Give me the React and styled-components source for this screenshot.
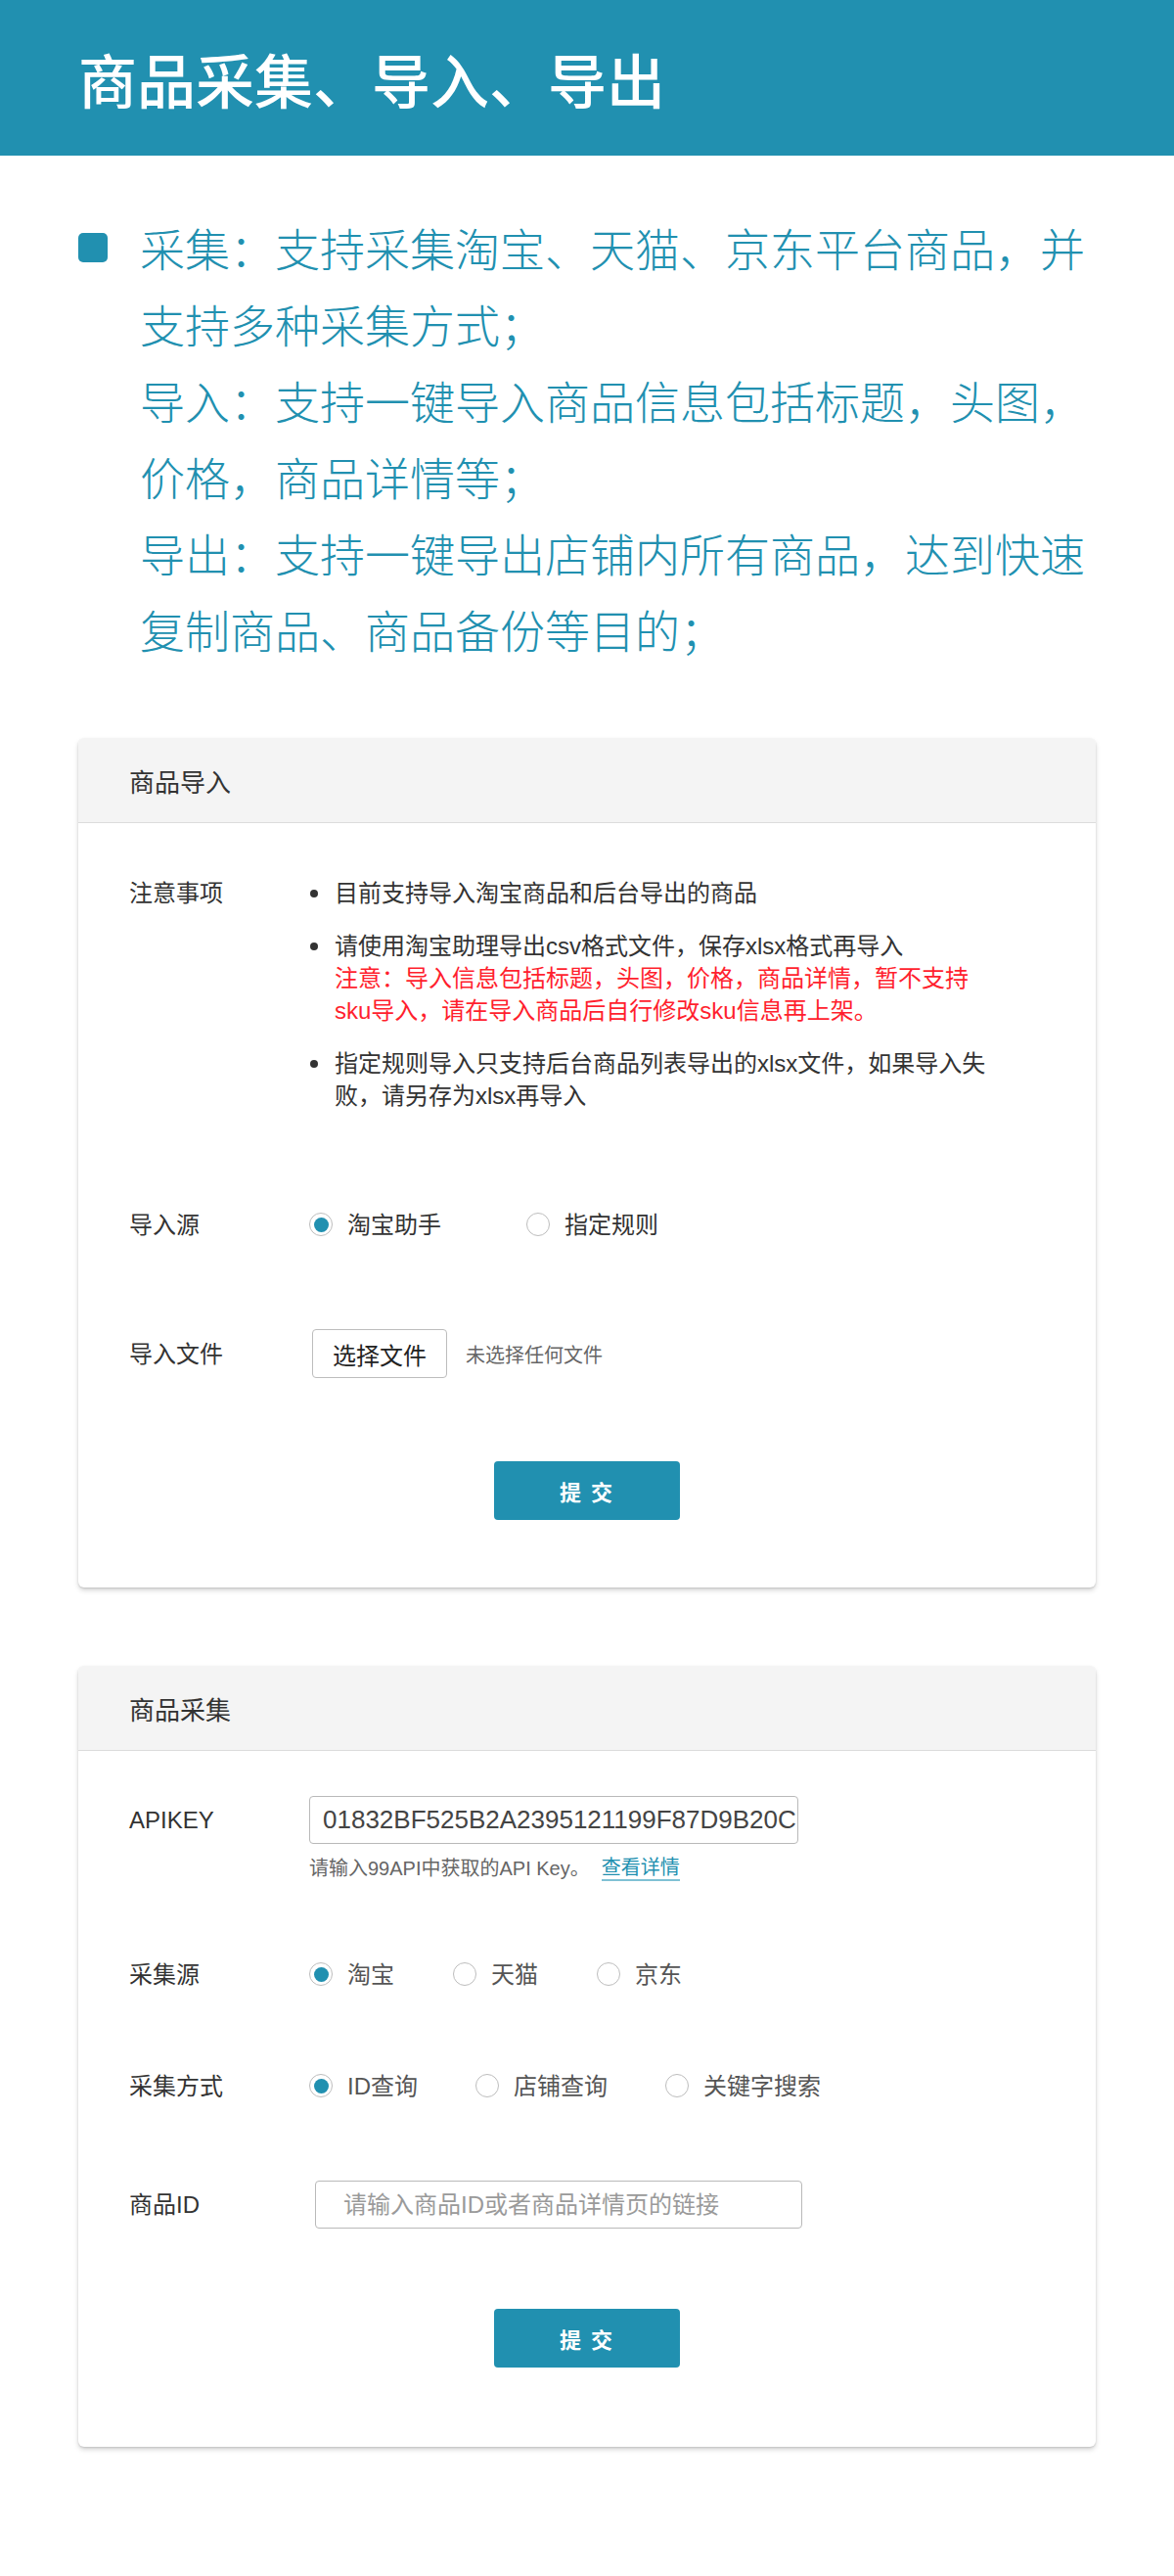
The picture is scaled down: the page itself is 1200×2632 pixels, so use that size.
import React from "react";
import styled, { createGlobalStyle } from "styled-components";

const TEAL = "#2190b0";
const FONT = `"Liberation Sans", "Noto Sans CJK SC", sans-serif`;

const Global = createGlobalStyle`
  html, body { margin: 0; padding: 0; background: #fff; }
  body { font-family: ${FONT}; color: #333; }
  * { box-sizing: border-box; }
`;

const Page = styled.div`
  width: 1200px;
  padding-bottom: 131px;
`;

const Header = styled.header`
  height: 159px;
  background: ${TEAL};
  display: flex;
  align-items: center;
  padding-left: 80px;
`;

const Title = styled.h1`
  margin: 0;
  font-family: "Noto Sans CJK SC", sans-serif;
  font-size: 60px;
  font-weight: 500;
  color: #fff;
  line-height: 1;
`;

const Intro = styled.section`
  display: flex;
  align-items: flex-start;
  gap: 33px;
  padding: 54px 80px 0;
`;

const Square = styled.span`
  flex: none;
  width: 30px;
  height: 30px;
  margin-top: 25px;
  border-radius: 5px;
  background: ${TEAL};
`;

const IntroText = styled.div`
  width: 980px;
`;

const IntroPara = styled.p`
  margin: 0;
  font-family: "Noto Sans CJK SC", sans-serif;
  font-size: 46px;
  font-weight: 300;
  line-height: 78px;
  color: ${TEAL};
`;

const Card = styled.section`
  margin: ${(p) => p.$top}px 80px 0;
  width: 1040px;
  background: #fff;
  border-radius: 6px;
  box-shadow: 0 1px 2px rgba(0, 0, 0, 0.12), 0 3px 5px rgba(0, 0, 0, 0.16);
  overflow: hidden;
`;

const CardHead = styled.div`
  height: 87px;
  background: #f4f4f4;
  border-bottom: 1px solid #dcdcdc;
  display: flex;
  align-items: center;
  padding-left: 52px;
  font-size: 26px;
  color: #333;
`;

const CardBody = styled.div`
  display: flex;
  flex-direction: column;
  padding: ${(p) => p.$top}px 52px ${(p) => p.$bottom}px;
`;

const Row = styled.div`
  display: flex;
  align-items: ${(p) => (p.$top ? "flex-start" : "center")};
  min-height: ${(p) => p.$h || 40}px;
  margin-top: ${(p) => p.$mt || 0}px;
`;

const Label = styled.div`
  flex: none;
  width: 184px;
  font-size: 24px;
  line-height: ${(p) => p.$lh || 33}px;
  color: #333;
`;

const Notes = styled.ul`
  list-style: none;
  margin: 0;
  padding: 0;
  width: 700px;
  display: flex;
  flex-direction: column;
  gap: 21px;
`;

const Note = styled.li`
  display: flex;
  align-items: flex-start;
  font-size: 24px;
  line-height: 33px;
  color: #333;
`;

const Dot = styled.span`
  flex: none;
  width: 8px;
  height: 8px;
  border-radius: 50%;
  background: #333;
  margin: 13px 17px 0 1px;
`;

const NoteText = styled.div`
  width: 675px;
`;

const Warn = styled.div`
  color: #ff1f2e;
`;

const RadioGroup = styled.div`
  display: flex;
  align-items: center;
  gap: ${(p) => p.$gap}px;
`;

const Option = styled.label`
  display: flex;
  align-items: center;
  gap: 15px;
  font-size: 24px;
  color: ${(p) => p.$tone || "#333"};
  line-height: 33px;
`;

const Circle = styled.span`
  flex: none;
  width: 24px;
  height: 24px;
  border-radius: 50%;
  border: 1px solid #bdbdbd;
  display: flex;
  align-items: center;
  justify-content: center;
  background: #fff;
  &::after {
    content: "";
    width: 15px;
    height: 15px;
    border-radius: 50%;
    background: ${(p) => (p.$on ? TEAL : "transparent")};
  }
`;

const FileButton = styled.button`
  width: 138px;
  height: 50px;
  margin-left: 3px;
  border: 1px solid #bdbdbd;
  border-radius: 4px;
  background: #fff;
  font-family: ${FONT};
  font-size: 24px;
  color: #222;
  padding: 0;
`;

const FileHint = styled.span`
  margin-left: 19px;
  font-size: 20px;
  color: #666;
`;

const Submit = styled.button`
  align-self: center;
  width: 190px;
  height: 60px;
  margin-top: ${(p) => p.$mt}px;
  border: none;
  border-radius: 4px;
  background: ${TEAL};
  color: #fff;
  font-family: ${FONT};
  font-size: 22px;
  font-weight: 700;
  letter-spacing: 2px;
  padding: 0;
`;

const Field = styled.div`
  display: flex;
  flex-direction: column;
`;

const TextBox = styled.input`
  width: ${(p) => p.$w}px;
  height: 49px;
  margin-left: ${(p) => p.$ml || 0}px;
  border: 1px solid #b9b9b9;
  border-radius: 4px;
  padding: 0 0 0 ${(p) => p.$pl}px;
  font-family: ${FONT};
  font-size: ${(p) => p.$fs}px;
  color: #444;
  outline: none;
  &::placeholder {
    color: #9a9a9a;
  }
`;

const Help = styled.div`
  margin-top: 13px;
  font-size: 20px;
  line-height: 24px;
  color: #666;
  display: flex;
  align-items: flex-start;
`;

const HelpLink = styled.a`
  margin-left: 12px;
  color: ${TEAL};
  text-decoration: none;
  border-bottom: 2px solid #7fc1d4;
  line-height: 23px;
`;

function Radios({ options, checked, gap, tone }) {
  return (
    <RadioGroup $gap={gap}>
      {options.map((o, i) => (
        <Option key={o} $tone={tone}>
          <Circle $on={i === checked} />
          {o}
        </Option>
      ))}
    </RadioGroup>
  );
}

export default function App() {
  return (
    <Page>
      <Global />
      <Header>
        <Title>商品采集、导入、导出</Title>
      </Header>

      <Intro>
        <Square />
        <IntroText>
          <IntroPara>采集：支持采集淘宝、天猫、京东平台商品，并支持多种采集方式；</IntroPara>
          <IntroPara>导入：支持一键导入商品信息包括标题，头图，价格，商品详情等；</IntroPara>
          <IntroPara>导出：支持一键导出店铺内所有商品，达到快速复制商品、商品备份等目的；</IntroPara>
        </IntroText>
      </Intro>

      <Card $top={73}>
        <CardHead>商品导入</CardHead>
        <CardBody $top={55} $bottom={69}>
          <Row $top>
            <Label>注意事项</Label>
            <Notes>
              <Note>
                <Dot />
                <NoteText>目前支持导入淘宝商品和后台导出的商品</NoteText>
              </Note>
              <Note>
                <Dot />
                <NoteText>
                  请使用淘宝助理导出csv格式文件，保存xlsx格式再导入
                  <Warn>注意：导入信息包括标题，头图，价格，商品详情，暂不支持sku导入，请在导入商品后自行修改sku信息再上架。</Warn>
                </NoteText>
              </Note>
              <Note>
                <Dot />
                <NoteText>指定规则导入只支持后台商品列表导出的xlsx文件，如果导入失败，请另存为xlsx再导入</NoteText>
              </Note>
            </Notes>
          </Row>
          <Row $mt={95}>
            <Label>导入源</Label>
            <Radios options={["淘宝助手", "指定规则"]} checked={0} gap={87} />
          </Row>
          <Row $mt={87} $h={50}>
            <Label>导入文件</Label>
            <FileButton>选择文件</FileButton>
            <FileHint>未选择任何文件</FileHint>
          </Row>
          <Submit $mt={85}>提 交</Submit>
        </CardBody>
      </Card>

      <Card $top={80}>
        <CardHead>商品采集</CardHead>
        <CardBody $top={46} $bottom={81}>
          <Row $top>
            <Label $lh={49}>APIKEY</Label>
            <Field>
              <TextBox $w={500} $pl={13} $fs={26} defaultValue="01832BF525B2A2395121199F87D9B20C" />
              <Help>
                请输入99API中获取的API Key。
                <HelpLink>查看详情</HelpLink>
              </Help>
            </Field>
          </Row>
          <Row $mt={75}>
            <Label>采集源</Label>
            <Radios options={["淘宝", "天猫", "京东"]} checked={0} gap={60} tone="#555" />
          </Row>
          <Row $mt={74}>
            <Label>采集方式</Label>
            <Radios options={["ID查询", "店铺查询", "关键字搜索"]} checked={0} gap={59} tone="#555" />
          </Row>
          <Row $mt={77} $h={49}>
            <Label>商品ID</Label>
            <TextBox $w={498} $ml={6} $pl={28} $fs={24} placeholder="请输入商品ID或者商品详情页的链接" />
          </Row>
          <Submit $mt={82}>提 交</Submit>
        </CardBody>
      </Card>
    </Page>
  );
}
